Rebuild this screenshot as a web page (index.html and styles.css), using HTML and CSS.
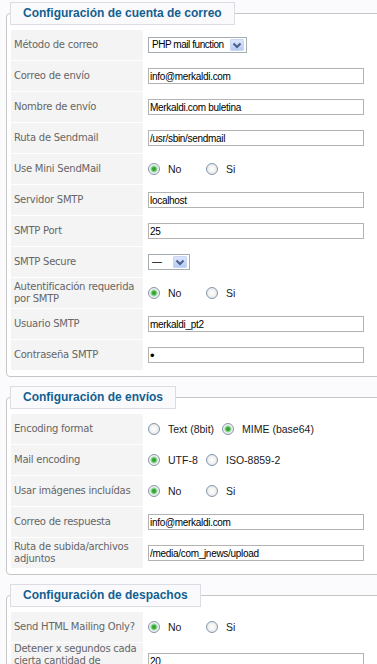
FILE: index.html
```
<!DOCTYPE html>
<html lang="es">
<head>
<meta charset="utf-8">
<title>Configuración de correo</title>
<link rel="stylesheet" href="styles.css">
</head>
<body>
<div class="page">

<fieldset class="adminform">
<legend>Configuración de cuenta de correo</legend>
<table class="admintable">
<tr><td class="key">Método de correo</td><td class="val"><div class="select sel-wide"><span class="sel-text">PHP mail function</span><span class="sel-btn"><svg width="10" height="7" viewBox="0 0 10 7"><path d="M1.5 1.5 L5 5 L8.5 1.5" fill="none" stroke="#4a5f8c" stroke-width="2"/></svg></span></div></td></tr>
<tr><td class="key">Correo de envío</td><td class="val"><input class="txt" type="text" value="info@merkaldi.com"></td></tr>
<tr><td class="key">Nombre de envío</td><td class="val"><input class="txt" type="text" value="Merkaldi.com buletina"></td></tr>
<tr><td class="key">Ruta de Sendmail</td><td class="val"><input class="txt" type="text" value="/usr/sbin/sendmail"></td></tr>
<tr><td class="key">Use Mini SendMail</td><td class="val"><div class="radios"><input class="rb" type="radio" name="mini" id="mini0" checked><label for="mini0">No</label><input class="rb" type="radio" name="mini" id="mini1"><label for="mini1">Si</label></div></td></tr>
<tr><td class="key">Servidor SMTP</td><td class="val"><input class="txt" type="text" value="localhost"></td></tr>
<tr><td class="key">SMTP Port</td><td class="val"><input class="txt" type="text" value="25"></td></tr>
<tr><td class="key">SMTP Secure</td><td class="val"><div class="select sel-short"><span class="sel-text">—</span><span class="sel-btn"><svg width="10" height="7" viewBox="0 0 10 7"><path d="M1.5 1.5 L5 5 L8.5 1.5" fill="none" stroke="#4a5f8c" stroke-width="2"/></svg></span></div></td></tr>
<tr><td class="key">Autentificación requerida por SMTP</td><td class="val"><div class="radios"><input class="rb" type="radio" name="auth" id="auth0" checked><label for="auth0">No</label><input class="rb" type="radio" name="auth" id="auth1"><label for="auth1">Si</label></div></td></tr>
<tr><td class="key">Usuario SMTP</td><td class="val"><input class="txt" type="text" value="merkaldi_pt2"></td></tr>
<tr><td class="key">Contraseña SMTP</td><td class="val"><input class="txt pwd" type="password" value="x"></td></tr>
</table>
</fieldset>

<fieldset class="adminform">
<legend>Configuración de envíos</legend>
<table class="admintable">
<tr><td class="key">Encoding format</td><td class="val"><div class="radios"><input class="rb" type="radio" name="enc" id="enc0"><label for="enc0">Text (8bit)</label><input class="rb" type="radio" name="enc" id="enc1" checked><label for="enc1">MIME (base64)</label></div></td></tr>
<tr><td class="key">Mail encoding</td><td class="val"><div class="radios"><input class="rb" type="radio" name="me" id="me0" checked><label for="me0">UTF-8</label><input class="rb" type="radio" name="me" id="me1"><label for="me1">ISO-8859-2</label></div></td></tr>
<tr><td class="key">Usar imágenes incluídas</td><td class="val"><div class="radios"><input class="rb" type="radio" name="img" id="img0" checked><label for="img0">No</label><input class="rb" type="radio" name="img" id="img1"><label for="img1">Si</label></div></td></tr>
<tr><td class="key">Correo de respuesta</td><td class="val"><input class="txt" type="text" value="info@merkaldi.com"></td></tr>
<tr><td class="key">Ruta de subida/archivos adjuntos</td><td class="val"><input class="txt" type="text" value="/media/com_jnews/upload"></td></tr>
</table>
</fieldset>

<fieldset class="adminform">
<legend>Configuración de despachos</legend>
<table class="admintable">
<tr><td class="key">Send HTML Mailing Only?</td><td class="val"><div class="radios"><input class="rb" type="radio" name="html" id="html0" checked><label for="html0">No</label><input class="rb" type="radio" name="html" id="html1"><label for="html1">Si</label></div></td></tr>
<tr><td class="key">Detener x segundos cada cierta cantidad de mensajes</td><td class="val"><input class="txt" type="text" value="20"></td></tr>
</table>
</fieldset>

</div>
</body>
</html>
```

FILE: styles.css
```
html, body {
  margin: 0;
  padding: 0;
}

body {
  background: #fbfbfd;
  overflow: hidden;
  font-family: "DejaVu Sans", Verdana, sans-serif;
}

.page {
  padding: 2px 0 0 6px;
}

.adminform {
  margin: 0 -80px 9px 0;
  padding: 4px 0 5px 3px;
  min-width: 0;
  border: 1px solid #c6c6c6;
  border-radius: 4px;
  background: #ffffff;
}

.adminform legend {
  margin: 0;
  padding: 0 12px;
  height: 21px;
  line-height: 21px;
  border: 1px solid #dcdce4;
  background: #fafafc;
  color: #135f91;
  font-family: "Liberation Sans", Arial, sans-serif;
  font-weight: bold;
  font-size: 12px;
}

.admintable {
  border-collapse: separate;
  border-spacing: 1px;
  table-layout: fixed;
  width: 100%;
}

.admintable td {
  height: 30px;
  vertical-align: middle;
}

.key {
  width: 129px;
  padding: 0 0 0 3px;
  background: #f4f4f4;
  color: #666666;
  font-size: 10px;
  letter-spacing: -0.25px;
  line-height: 12px;
}

.val {
  padding: 0 0 0 4px;
}

.txt {
  display: block;
  box-sizing: border-box;
  width: 216px;
  height: 16px;
  margin: 0;
  padding: 0 1px;
  border: 1px solid #b3b3b3;
  background: #ffffff;
  color: #000000;
  font-family: "Liberation Sans", Arial, sans-serif;
  font-size: 10px;
  letter-spacing: -0.3px;
  outline: none;
}

.pwd {
  font-size: 13px;
  letter-spacing: 0;
}

.select {
  display: flex;
  align-items: center;
  box-sizing: border-box;
  height: 16px;
  border: 1px solid #a5acb2;
  background: #ffffff;
}

.sel-wide {
  width: 99px;
}

.sel-short {
  width: 42px;
}

.sel-text {
  flex: 1;
  padding-left: 3px;
  color: #000000;
  font-family: "Liberation Sans", Arial, sans-serif;
  font-size: 10px;
  letter-spacing: -0.45px;
  line-height: 14px;
  white-space: nowrap;
  overflow: hidden;
}

.sel-btn {
  display: flex;
  align-items: center;
  justify-content: center;
  box-sizing: border-box;
  width: 14px;
  height: 12px;
  margin-right: 2px;
  border: 1px solid #c9d7f5;
  border-radius: 1px;
  background: linear-gradient(#dbe5fc, #b8cbf4);
}

.radios {
  display: flex;
  align-items: center;
}

.rb {
  -webkit-appearance: none;
  appearance: none;
  box-sizing: border-box;
  width: 12px;
  height: 12px;
  margin: 0 8px 0 0;
  border: 1px solid #8596ad;
  border-radius: 50%;
  background: radial-gradient(circle, #ffffff 0, #f3f3f3 45%, #d9dde4 100%);
  flex: none;
}

.rb:checked {
  background: radial-gradient(circle, #2e9b2e 0, #3aab3a 1.6px, #a6dba6 3px, #f3f5f3 4.2px, #d9dde4 100%);
}

.radios label {
  min-width: 30px;
  margin-right: 8px;
  color: #1a1a1a;
  font-family: "Liberation Sans", Arial, sans-serif;
  font-size: 10.5px;
  white-space: nowrap;
}
```
